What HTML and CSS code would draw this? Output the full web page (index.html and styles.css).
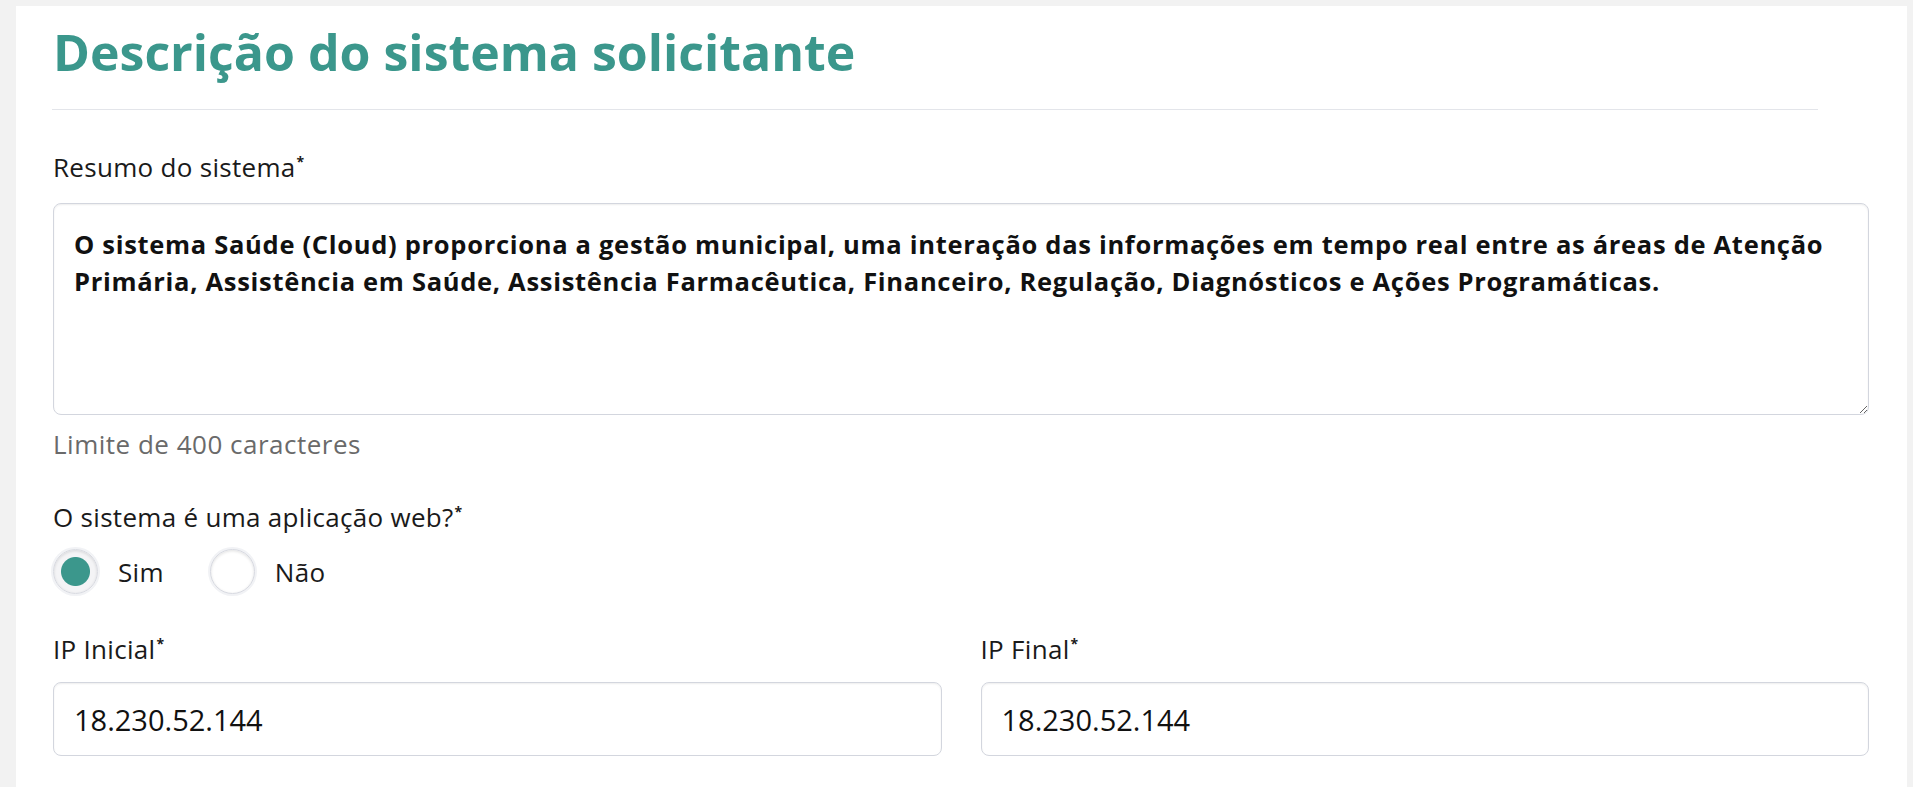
FILE: index.html
```html
<!DOCTYPE html>
<html lang="pt-BR">
<head>
<meta charset="utf-8">
<title>Descrição do sistema solicitante</title>
<link rel="stylesheet" href="styles.css">
</head>
<body>
<main class="card">
  <h1 class="title">Descrição do sistema solicitante</h1>
  <hr class="divider">

  <div class="field">
    <label class="label" for="resumo">Resumo do sistema<sup>*</sup></label>
    <textarea id="resumo" class="textarea" readonly>O sistema Saúde (Cloud) proporciona a gestão municipal, uma interação das informações em tempo real entre as áreas de Atenção Primária, Assistência em Saúde, Assistência Farmacêutica, Financeiro, Regulação, Diagnósticos e Ações Programáticas.</textarea>
    <p class="help">Limite de 400 caracteres</p>
  </div>

  <div class="field field-radio">
    <span class="label label-radio">O sistema é uma aplicação web?<sup>*</sup></span>
    <div class="radios">
      <label class="radio-opt"><input type="radio" name="web" class="radio" checked><span>Sim</span></label>
      <label class="radio-opt"><input type="radio" name="web" class="radio"><span>Não</span></label>
    </div>
  </div>

  <div class="grid">
    <div class="col">
      <label class="label label-ip" for="ipi">IP Inicial<sup>*</sup></label>
      <input id="ipi" class="input" type="text" value="18.230.52.144" readonly>
    </div>
    <div class="col">
      <label class="label label-ip" for="ipf">IP Final<sup>*</sup></label>
      <input id="ipf" class="input" type="text" value="18.230.52.144" readonly>
    </div>
  </div>
</main>
</body>
</html>
```

FILE: styles.css
```css
html, body {
  margin: 0;
  padding: 0;
  height: 100%;
  overflow: hidden;
}
body {
  background: #f2f2f2;
  font-family: "Open Sans", "Liberation Sans", sans-serif;
  color: #1a1a1a;
}
.card {
  display: block;
  box-sizing: border-box;
  background: #ffffff;
  margin: 6px 6px 0 16px;
  padding: 16px 38px 0 37px;
  height: calc(100vh - 6px);
  overflow: hidden;
}
.title {
  margin: 0;
  font-size: 50px;
  line-height: 60px;
  font-weight: 700;
  color: #3b978c;
}
.divider {
  border: 0;
  border-top: 1px solid #e3e5ea;
  margin: 27px 51px 0 -1px;
  height: 0;
}
.label {
  display: block;
  font-size: 26px;
  line-height: 34px;
  letter-spacing: 0.3px;
  font-weight: 400;
  color: #1a1a1a;
}
.label sup {
  font-size: 14px;
  font-weight: 700;
  vertical-align: top;
  line-height: 1;
  position: relative;
  top: 5px;
  margin-left: 1px;
}
.field {
  margin-top: 40px;
}
.field .label {
  margin-bottom: 19px;
}
.textarea {
  display: block;
  box-sizing: border-box;
  width: 100%;
  height: 212px;
  margin: 0;
  padding: 22px 40px 20px 20px;
  border: 1px solid #d3d6de;
  border-radius: 8px;
  box-shadow: inset 0 1px 2px rgba(0, 0, 0, 0.07);
  font-family: "Open Sans", "Liberation Sans", sans-serif;
  font-size: 25.5px;
  letter-spacing: 0.7px;
  line-height: 37px;
  font-weight: 700;
  color: #111;
  background: #fff;
  resize: vertical;
  outline: none;
}
.help {
  margin: 12px 0 0;
  font-size: 26px;
  line-height: 34px;
  letter-spacing: 0.5px;
  color: #6a6a6a;
}
.field-radio {
  margin-top: 39px;
}
.field-radio .label-radio {
  margin-bottom: 15px;
}
.radios {
  display: flex;
  align-items: center;
  gap: 46px;
}
.radio-opt {
  display: flex;
  align-items: center;
  gap: 20px;
  font-size: 26px;
  line-height: 34px;
  letter-spacing: 0.3px;
}
.radio {
  appearance: none;
  -webkit-appearance: none;
  margin: 0;
  width: 45px;
  height: 45px;
  border-radius: 50%;
  border: 1px solid #d8dae1;
  background: #fff;
  box-shadow: inset 0 1px 3px rgba(0, 0, 0, 0.12), 0 0 0 2px #f1f2f5;
  box-sizing: border-box;
}
.radio:checked {
  background: radial-gradient(circle, #3b978c 0, #3b978c 14px, #f4f4f6 15px);
}
.grid {
  display: grid;
  grid-template-columns: 1fr 1fr;
  column-gap: 39px;
  margin-top: 38px;
}
.label-ip {
  margin-bottom: 16px;
}
.input {
  display: block;
  box-sizing: border-box;
  width: 100%;
  height: 74px;
  margin: 0;
  padding: 0 20px;
  border: 1px solid #d3d6de;
  border-radius: 8px;
  box-shadow: inset 0 1px 2px rgba(0, 0, 0, 0.07);
  font-family: "Open Sans", "Liberation Sans", sans-serif;
  font-size: 29px;
  color: #111;
  background: #fff;
  outline: none;
}
```
